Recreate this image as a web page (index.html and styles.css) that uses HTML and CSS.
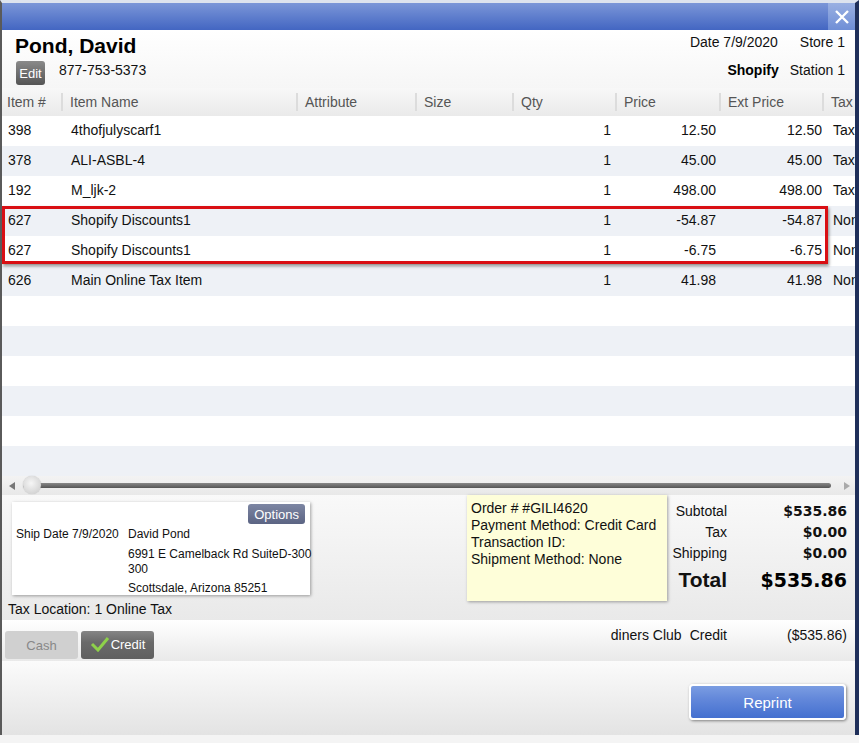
FILE: index.html
```html
<!DOCTYPE html>
<html>

	<head>

		<meta charset="UTF-8">
		<link rel="stylesheet" href="styles.css">
		<title>Order Detail</title>

	</head>

	<body>

		<div class="window">
			<div class="titlebar">
				<button class="btn-close">
					<svg width="16" height="16" viewBox="0 0 16 16"><path d="M2 2 L14 14 M14 2 L2 14" stroke="#fff" stroke-width="2.4"/></svg>
				</button>
			</div>

			<div class="header">
				<div class="customer">
					<h1 class="customer-name">Pond, David</h1>
					<div class="customer-line">
						<button class="btn-edit">Edit</button>
						<span class="customer-phone">877-753-5373</span>
					</div>
				</div>
				<div class="store-info">
					<div class="store-line"><span>Date 7/9/2020</span><span class="store-gap">Store 1</span></div>
					<div class="store-line"><b>Shopify</b><span class="store-gap">Station 1</span></div>
				</div>
			</div>

			<div class="grid">
				<div class="grid-head">
					<div class="col col-num">Item #</div>
					<div class="col col-name sep">Item Name</div>
					<div class="col col-attr sep">Attribute</div>
					<div class="col col-size sep">Size</div>
					<div class="col col-qty sep">Qty</div>
					<div class="col col-price sep">Price</div>
					<div class="col col-ext sep">Ext Price</div>
					<div class="col col-tax sep">Tax</div>
				</div>
				<div class="grid-body">
					<div class="row">
						<div class="col col-num">398</div>
						<div class="col col-name">4thofjulyscarf1</div>
						<div class="col col-attr"></div>
						<div class="col col-size"></div>
						<div class="col col-qty num">1</div>
						<div class="col col-price num">12.50</div>
						<div class="col col-ext num">12.50</div>
						<div class="col col-tax">Tax</div>
					</div>
					<div class="row">
						<div class="col col-num">378</div>
						<div class="col col-name">ALI-ASBL-4</div>
						<div class="col col-attr"></div>
						<div class="col col-size"></div>
						<div class="col col-qty num">1</div>
						<div class="col col-price num">45.00</div>
						<div class="col col-ext num">45.00</div>
						<div class="col col-tax">Tax</div>
					</div>
					<div class="row">
						<div class="col col-num">192</div>
						<div class="col col-name">M_ljk-2</div>
						<div class="col col-attr"></div>
						<div class="col col-size"></div>
						<div class="col col-qty num">1</div>
						<div class="col col-price num">498.00</div>
						<div class="col col-ext num">498.00</div>
						<div class="col col-tax">Tax</div>
					</div>
					<div class="row">
						<div class="col col-num">627</div>
						<div class="col col-name">Shopify Discounts1</div>
						<div class="col col-attr"></div>
						<div class="col col-size"></div>
						<div class="col col-qty num">1</div>
						<div class="col col-price num">-54.87</div>
						<div class="col col-ext num">-54.87</div>
						<div class="col col-tax">Non</div>
					</div>
					<div class="row">
						<div class="col col-num">627</div>
						<div class="col col-name">Shopify Discounts1</div>
						<div class="col col-attr"></div>
						<div class="col col-size"></div>
						<div class="col col-qty num">1</div>
						<div class="col col-price num">-6.75</div>
						<div class="col col-ext num">-6.75</div>
						<div class="col col-tax">Non</div>
					</div>
					<div class="row">
						<div class="col col-num">626</div>
						<div class="col col-name">Main Online Tax Item</div>
						<div class="col col-attr"></div>
						<div class="col col-size"></div>
						<div class="col col-qty num">1</div>
						<div class="col col-price num">41.98</div>
						<div class="col col-ext num">41.98</div>
						<div class="col col-tax">Non</div>
					</div>
					<div class="row"></div>
					<div class="row"></div>
					<div class="row"></div>
					<div class="row"></div>
					<div class="row"></div>
					<div class="row"></div>
					<div class="highlight"></div>
				</div>
			</div>

			<div class="hscroll">
				<span class="arrow arrow-left"></span>
				<div class="track">
					<span class="thumb"></span>
				</div>
				<span class="arrow arrow-right"></span>
			</div>

			<div class="summary">
				<div class="summary-left">
					<div class="ship-card">
						<button class="btn-options">Options</button>
						<div class="ship-body">
							<div class="ship-date">Ship Date 7/9/2020</div>
							<div class="ship-address">
								<div class="ship-name">David Pond</div>
								<div class="ship-street">6991 E Camelback Rd SuiteD-300<br>300</div>
								<div class="ship-city">Scottsdale, Arizona 85251</div>
							</div>
						</div>
					</div>
					<div class="tax-location">Tax Location: 1 Online Tax</div>
				</div>
				<div class="order-note">
					Order # #GILI4620<br>
					Payment Method: Credit Card<br>
					Transaction ID:<br>
					Shipment Method: None
				</div>
				<div class="totals">
					<div class="total-line"><span class="total-label">Subtotal</span><b class="total-value">$535.86</b></div>
					<div class="total-line"><span class="total-label">Tax</span><b class="total-value">$0.00</b></div>
					<div class="total-line"><span class="total-label">Shipping</span><b class="total-value">$0.00</b></div>
					<div class="total-line total-grand"><span class="total-label">Total</span><b class="total-value">$535.86</b></div>
				</div>
			</div>

			<div class="payments">
				<div class="tender">
					<button class="btn-tender btn-cash">Cash</button>
					<button class="btn-tender btn-credit">
						<svg width="20" height="16" viewBox="0 0 20 16"><path d="M2 8 L8 14 L18 2" fill="none" stroke="#8ed14a" stroke-width="3"/></svg>
						Credit
					</button>
				</div>
				<div class="payment-line">
					<span>diners Club</span>
					<span class="payment-type">Credit</span>
					<span class="payment-amount">($535.86)</span>
				</div>
			</div>

			<div class="footer">
				<button class="btn-reprint">Reprint</button>
			</div>
		</div>

	</body>
</html>
```

FILE: styles.css
```css
		body {
			margin: 0;
			font-family: 'Liberation Sans', Arial, sans-serif;
			font-size: 14px;
			color: #111;
			background: #f4f4f4;
		}
		button {
			font-family: inherit;
			cursor: pointer;
		}
		.window {
			width: 853px;
			height: 732px;
			border-left: 2px solid #5a5a5a;
			border-right: 4px solid #1f2f5a;
			border-top: 3px solid #dde3ee;
			background: #fff;
			display: flex;
			flex-direction: column;
			overflow: hidden;
		}
		.titlebar {
			height: 27px;
			flex: none;
			display: flex;
			justify-content: flex-end;
			background: linear-gradient(#7b96d8, #4366c2);
		}
		.btn-close {
			width: 27px;
			height: 27px;
			border: 0;
			padding: 0;
			display: flex;
			align-items: center;
			justify-content: center;
			background: linear-gradient(#9ab0e2, #6f8ed6);
		}
		.header {
			height: 58px;
			flex: none;
			display: flex;
			justify-content: space-between;
			background: linear-gradient(#fff, #f6f6f6);
		}
		.customer {
			padding: 4px 0 0 13px;
		}
		.customer-name {
			margin: 0;
			font-size: 21px;
			line-height: 24px;
			color: #000;
		}
		.customer-line {
			display: flex;
			align-items: center;
			margin-top: 3px;
		}
		.btn-edit {
			width: 29px;
			height: 24px;
			padding: 0;
			margin-left: 1px;
			border: 0;
			border-radius: 3px;
			font-size: 13px;
			color: #fff;
			background: linear-gradient(#8a8a8a, #555);
		}
		.customer-phone {
			margin: -7px 0 0 14px;
		}
		.store-info {
			padding: 2px 10px 0 0;
			text-align: right;
		}
		.store-line {
			height: 28px;
			line-height: 20px;
		}
		.store-gap {
			margin-left: 22px;
		}
		.store-line b {
			color: #000;
		}
		.store-line:last-child .store-gap {
			margin-left: 11px;
		}
		.grid {
			flex: none;
		}
		.grid-head {
			height: 28px;
			display: flex;
			align-items: center;
			color: #555;
			background: linear-gradient(#f8f8f8, #eaeaea);
		}
		.col {
			flex: none;
			box-sizing: border-box;
			white-space: nowrap;
			overflow: hidden;
		}
		.sep {
			border-left: 2px solid #dcdcdc;
		}
		.grid-head .col {
			height: 18px;
			line-height: 19px;
		}
		.grid-head .col-num { padding-left: 5px; }
		.grid-head .sep { padding-left: 7px; }
		.col-num { width: 59px; padding-left: 6px; }
		.col-name { width: 235px; padding-left: 10px; }
		.col-attr { width: 119px; }
		.col-size { width: 97px; }
		.col-qty { width: 103px; }
		.col-price { width: 104px; }
		.col-ext { width: 103px; }
		.col-tax { width: 40px; padding-left: 11px; }
		.num {
			text-align: right;
			padding-right: 4px;
		}
		.col-price.num { padding-right: 3px; }
		.col-ext.num { padding-right: 0; }
		.grid-body {
			position: relative;
		}
		.row {
			height: 30px;
			display: flex;
			align-items: center;
			background: #fff;
		}
		.row:nth-child(even) {
			background: #eef1f6;
		}
		.row .col {
			margin-top: -2px;
		}
		.highlight {
			position: absolute;
			left: 0;
			top: 90px;
			width: 820px;
			height: 52px;
			border: 3px solid #d90f14;
			box-shadow: 1px 2px 3px rgba(0, 0, 0, 0.45);
		}
		.hscroll {
			height: 19px;
			flex: none;
			display: flex;
			align-items: center;
			padding: 0 5px 0 7px;
			background: linear-gradient(#f3f3f3, #e8e8e8);
		}
		.arrow {
			width: 0;
			height: 0;
			border-top: 4px solid transparent;
			border-bottom: 4px solid transparent;
		}
		.arrow-left {
			border-right: 6px solid #777;
		}
		.arrow-right {
			border-left: 6px solid #aaa;
			margin-left: 13px;
		}
		.track {
			flex: 1;
			height: 5px;
			margin-left: 8px;
			border-radius: 3px;
			background: linear-gradient(#888, #555);
			position: relative;
		}
		.thumb {
			position: absolute;
			left: 0;
			top: -7px;
			width: 18px;
			height: 18px;
			border-radius: 50%;
			background: radial-gradient(circle at 45% 40%, #f6f6f6, #c8c8c8);
			box-shadow: 0 0 1px #999;
		}
		.summary {
			height: 125px;
			flex: none;
			display: flex;
			background: linear-gradient(#f9f9f9, #e9e9e9);
		}
		.summary-left {
			width: 465px;
			padding-top: 7px;
		}
		.ship-card {
			width: 298px;
			height: 93px;
			margin-left: 10px;
			box-sizing: border-box;
			padding: 2px 5px 0 4px;
			background: #fff;
			box-shadow: 1px 1px 3px rgba(0, 0, 0, 0.35);
			font-size: 12px;
		}
		.btn-options {
			display: block;
			margin-left: auto;
			height: 20px;
			padding: 0 6px;
			border: 0;
			border-radius: 3px;
			font-size: 13px;
			color: #fff;
			background: linear-gradient(#7d86a3, #5b6483);
		}
		.ship-body {
			display: flex;
			margin-top: 3px;
			line-height: 15px;
		}
		.ship-date {
			flex: none;
			width: 112px;
		}
		.ship-address {
			white-space: nowrap;
		}
		.ship-street {
			margin-top: 5px;
		}
		.ship-city {
			margin-top: 4px;
		}
		.tax-location {
			margin: 6px 0 0 6px;
		}
		.order-note {
			width: 200px;
			height: 106px;
			box-sizing: border-box;
			padding: 5px 4px;
			line-height: 17px;
			background: #fefed9;
			box-shadow: 1px 1px 3px rgba(0, 0, 0, 0.35);
		}
		.totals {
			width: 180px;
			padding-top: 6px;
		}
		.total-line {
			display: flex;
			justify-content: space-between;
			height: 21px;
			line-height: 21px;
		}
		.total-label {
			width: 60px;
			text-align: right;
		}
		.total-value {
			color: #111;
			font-family: 'DejaVu Sans', sans-serif;
			font-size: 14px;
		}
		.total-grand {
			height: 30px;
			line-height: 30px;
			margin-top: 1px;
			font-size: 21px;
			font-weight: bold;
		}
		.total-grand .total-value {
			font-size: 19px;
			color: #000;
		}
		.payments {
			height: 41px;
			flex: none;
			display: flex;
			justify-content: space-between;
			background: linear-gradient(#fff, #e9e9e9);
		}
		.tender {
			display: flex;
			gap: 3px;
			padding: 11px 0 0 3px;
		}
		.btn-tender {
			width: 73px;
			height: 28px;
			border: 0;
			border-radius: 3px;
			font-size: 13px;
			display: flex;
			align-items: center;
			justify-content: center;
		}
		.btn-cash {
			color: #888;
			background: #d0d0d0;
		}
		.btn-credit {
			color: #fff;
			background: linear-gradient(#858585, #6a6a6a 40%, #5f5f5f);
			padding: 0 0 2px;
			gap: 1px;
		}
		.payment-line {
			padding: 7px 8px 0 0;
			display: flex;
		}
		.payment-type {
			margin-left: 8px;
		}
		.payment-amount {
			width: 120px;
			text-align: right;
		}
		.footer {
			flex: 1;
			display: flex;
			justify-content: flex-end;
			align-items: flex-start;
			padding: 23px 9px 0 0;
			background: linear-gradient(#fbfbfb, #e3e3e3);
		}
		.btn-reprint {
			width: 157px;
			height: 36px;
			border: 2px solid #fff;
			border-radius: 4px;
			font-size: 15px;
			color: #fff;
			background: linear-gradient(#7b9de2, #6388da 40%, #4470d0);
			box-shadow: 1px 1px 3px rgba(0, 0, 0, 0.45);
		}
```
